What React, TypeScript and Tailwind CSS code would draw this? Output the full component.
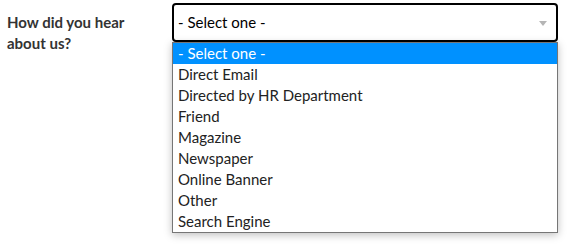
import React from "react";

const options = [
  "- Select one -",
  "Direct Email",
  "Directed by HR Department",
  "Friend",
  "Magazine",
  "Newspaper",
  "Online Banner",
  "Other",
  "Search Engine",
];

export default function App() {
  return (
    <div className="min-h-[247px] bg-white flex pt-[3px] pl-[7px] font-['Lato','Liberation_Sans',sans-serif]">
      <div className="w-[165px] pt-[9px] text-[15px] font-bold leading-[21px] text-[#333]">
        How did you hear
        <br />
        about us?
      </div>
      <div className="relative w-[386px]">
        <div className="h-[39px] border-2 border-black rounded-[4px] flex items-center justify-between pl-[4px] pr-[9px] text-[15px] text-black bg-white">
          <span>- Select one -</span>
          <svg width="8" height="5" viewBox="0 0 8 5" className="mt-[2px]">
            <path d="M0 0 H8 L4 5 Z" fill="#b5b5b5" />
          </svg>
        </div>
        <ul className="absolute left-0 top-[39px] w-[386px] border border-[#767676] bg-white shadow-[0_2px_8px_rgba(0,0,0,0.25)]">
          {options.map((o, i) => (
            <li
              key={o}
              className={
                i === 0
                  ? "h-[21px] leading-[21px] pl-[5px] text-[15px] bg-[#0091ff] text-white"
                  : "h-[21px] leading-[21px] pl-[5px] text-[15px] text-[#222]"
              }
            >
              {o}
            </li>
          ))}
        </ul>
      </div>
    </div>
  );
}
